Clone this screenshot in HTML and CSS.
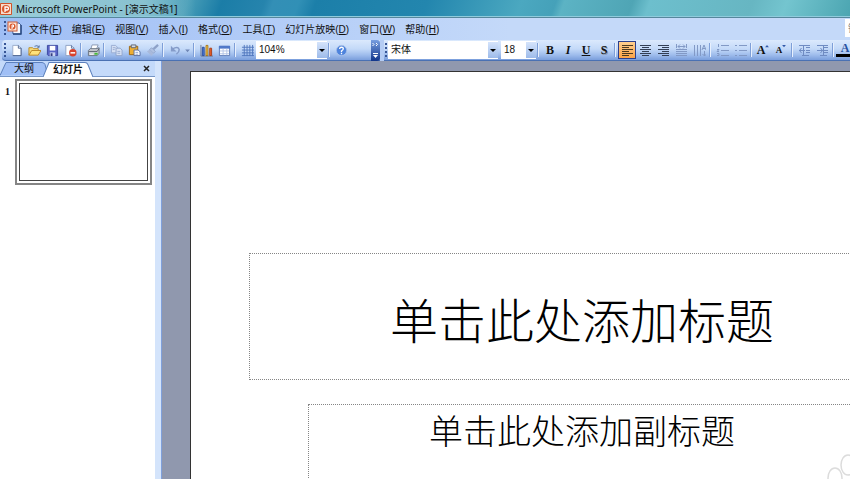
FILE: index.html
```html
<!DOCTYPE html>
<html lang="zh-CN">
<head>
  <meta charset="UTF-8" />
  <meta name="viewport" content="width=device-width, initial-scale=1" />
  <title>Microsoft PowerPoint - [演示文稿1]</title>
  <link rel="stylesheet" href="styles.css">
</head>
<body>

<header class="titlebar">
  <svg class="app-icon" viewBox="0 0 12 12"><rect width="12" height="12" rx="1" fill="#d2532a"/><rect x="1" y="1" width="10" height="10" fill="#f7dccb"/><circle cx="6" cy="6" r="4" fill="#d9572b"/><path d="M5 9V4h2a1 1 0 0 1 0 3H5" fill="none" stroke="#fff" stroke-width="1.3"/></svg>
  <h1>Microsoft PowerPoint - [演示文稿1]</h1>
</header>

<nav class="menubar">
  <span class="grip"></span>
  <svg class="doc-icon" viewBox="0 0 15 14"><path d="M5 2h7l2 2v9H6z" fill="#f4f7ff" stroke="#45659f"/><path d="M14 4v9H6" fill="none" stroke="#27477f" stroke-width="1.4"/><rect x="1" y="1" width="9" height="9" fill="#fbe3d5" stroke="#cf5a32"/><circle cx="5.500" cy="5.500" r="3" fill="#d9572b"/><path d="M5 8V4h1.500v2H5" fill="none" stroke="#fff"/></svg>
  <a href="#">文件(<u>F</u>)</a>
  <a href="#">编辑(<u>E</u>)</a>
  <a href="#">视图(<u>V</u>)</a>
  <a href="#">插入(<u>I</u>)</a>
  <a href="#">格式(<u>O</u>)</a>
  <a href="#">工具(<u>T</u>)</a>
  <a href="#">幻灯片放映(<u>D</u>)</a>
  <a href="#">窗口(<u>W</u>)</a>
  <a href="#">帮助(<u>H</u>)</a>
  <input class="ask" type="text" aria-label="帮助" placeholder="键" />
</nav>

<div class="toolbars">
  <div class="toolbar standard">
    <span class="grip"></span>
    <button class="tool" aria-label="新建"><svg viewBox="0 0 14 14"><path d="M3 1.500h6l3 3v8H3z" fill="#fff" stroke="#9dacc9"/><path d="M9 1.500v3h3v8H3" fill="none" stroke="#4b628f"/></svg></button>
    <button class="tool" aria-label="打开"><svg viewBox="0 0 14 14"><path d="M1 12V4h4l1 1h5v3" fill="#f7d978" stroke="#bb8c25"/><path d="M1 12l3-5h10l-3 5z" fill="#ffe27b" stroke="#b98323"/><path d="M7 2.500q3-2 5 1m0-2v2h-2" fill="none" stroke="#56719f"/></svg></button>
    <button class="tool" aria-label="保存"><svg viewBox="0 0 14 14"><path d="M1.500 1.500h11v11h-10l-1-1z" fill="#5964c6" stroke="#38469f"/><path d="M4 2h6v5H4z" fill="#fff"/><path d="M4 9h6v4H4z" fill="#c8d2f0"/><path d="M5 10h2v3H5z" fill="#333d80"/></svg></button>
    <button class="tool" aria-label="权限"><svg viewBox="0 0 14 14"><path d="M2 1.500h6l3 3v8H2z" fill="#fff" stroke="#8ea0c3"/><path d="M8 1.500v3h3" fill="none" stroke="#5970a0"/><circle cx="9.500" cy="9.500" r="4" fill="#d9422c"/><path d="M7 9.500h5" stroke="#fff" stroke-width="1.600"/></svg></button>
    <span class="sep"></span>
    <button class="tool" aria-label="打印"><svg viewBox="0 0 14 14"><path d="M4 6l1.500-5H12l-2 5" fill="#fff" stroke="#8896b0"/><path d="M1.500 7l2-2H11l2-1v6l-2 2.500H1.500z" fill="#c8ccd3" stroke="#697280"/><path d="M2 8h9l2-3" fill="none" stroke="#545d69"/><path d="M8 9.500h3.500v2H8z" fill="#43bc35"/><path d="M3 11h4" stroke="#fff"/></svg></button>
    <span class="sep"></span>
    <button class="tool" aria-label="复制" disabled><svg viewBox="0 0 14 14"><path d="M1.500 1.500H6l2 2v6H1.500z" fill="#d5e0f4" stroke="#98abd0"/><path d="M6.500 4.500H11l2 2v6H6.500z" fill="#d5e0f4" stroke="#91a5cb"/><path d="M3 4h3M3 6h2M8 8h3M8 10h3" stroke="#98abd0"/></svg></button>
    <button class="tool" aria-label="粘贴"><svg viewBox="0 0 14 14"><path d="M1.500 2.500h9v9h-9z" fill="#eeae32" stroke="#996415"/><path d="M3.500 1h5v3h-5z" fill="#d7dce3" stroke="#5c6370"/><path d="M6.500 6.500H11l2 2v4H6.500z" fill="#fff" stroke="#536ba2"/><path d="M8 9h3M8 11h3" stroke="#8aa0cd"/></svg></button>
    <button class="tool" aria-label="格式刷" disabled><svg viewBox="0 0 14 14"><path d="M13 1L8 5.500" stroke="#8da1c8" stroke-width="2.500"/><path d="M6 4l4 4-2 2-4-4z" fill="#b1c2e2" stroke="#8ea2c9"/><path d="M4 6l4 4-2 3-5-5z" fill="#a8b9db"/></svg></button>
    <span class="sep"></span>
    <button class="tool" aria-label="撤消" disabled><svg viewBox="0 0 14 14"><path d="M3.500 5.500Q10 2 11 6q0 3-3 5" fill="none" stroke="#849bc9" stroke-width="1.600"/><path d="M2 2v6h6z" fill="#849bc9"/></svg></button>
    <button class="tool drop" aria-label="撤消列表" disabled><svg viewBox="0 0 6 14"><path d="M0 6h5L2.500 9z" fill="#6f86b5"/></svg></button>
    <span class="sep"></span>
    <button class="tool" aria-label="图表"><svg viewBox="0 0 14 14"><path d="M1 1v12h13" fill="none" stroke="#6e7991"/><path d="M2.500 3.500h2v9h-2z" fill="#487bd7" stroke="#2b4d9b"/><path d="M6.500 1.500h2v11h-2z" fill="#ffcf45" stroke="#a47219"/><path d="M10.500 4.500h2v8h-2z" fill="#ef642c" stroke="#a53b19"/></svg></button>
    <button class="tool" aria-label="表格"><svg viewBox="0 0 14 14"><path d="M1.500 2.500h11v10h-11z" fill="#fff" stroke="#5877b4"/><path d="M1 2h12v3H1z" fill="#5079c9"/><path d="M5.500 5v7M9.500 5v7M2 7.500h10M2 10.500h10" stroke="#b2c4e6"/></svg></button>
    <span class="sep"></span>
    <button class="tool" aria-label="网格"><svg viewBox="0 0 14 14"><path d="M3.500 1v12M6.500 1v12M9.500 1v12M12.500 1v12M1 3.500h13M1 6.500h13M1 9.500h13M1 12.500h13" stroke="#4f77bd"/></svg></button>
    <span class="combo zoom"><select aria-label="显示比例"><option>104%</option></select></span>
    <span class="sep"></span>
    <button class="tool" aria-label="帮助"><svg viewBox="0 0 14 14"><circle cx="7" cy="7" r="5.500" fill="#4d83dd" stroke="#a4bee8"/><path d="M5 5.500q0-2 2-2t2 1.700q0 1-2 2.300v1M7 9.500v1.500" fill="none" stroke="#fff" stroke-width="1.400"/></svg></button>
    <button class="more" aria-label="工具栏选项"><svg viewBox="0 0 9 20"><path d="M1.500 3l1.500 1.500L1.500 6M5 3l1.500 1.500L5 6" fill="none" stroke="#fff"/><path d="M2 13.500h5" stroke="#fff"/><path d="M2 15h5l-2.500 3z" fill="#fff"/></svg></button>
  </div>

  <div class="toolbar formatting">
    <span class="grip"></span>
    <span class="combo font"><select aria-label="字体"><option>宋体</option></select></span>
    <span class="combo size"><select aria-label="字号"><option>18</option></select></span>
    <span class="sep"></span>
    <button class="tool letter" aria-label="加粗"><b>B</b></button>
    <button class="tool letter" aria-label="倾斜"><i>I</i></button>
    <button class="tool letter" aria-label="下划线"><u>U</u></button>
    <button class="tool letter shadow" aria-label="阴影">S</button>
    <span class="sep"></span>
    <button class="tool active" aria-label="左对齐"><svg viewBox="0 0 13 13"><path d="M1 1.500h11M1 3.500h7M1 5.500h11M1 7.500h7M1 9.500h11M1 11.500h7" stroke="#4b3920"/></svg></button>
    <button class="tool" aria-label="居中"><svg viewBox="0 0 13 13"><path d="M1 1.500h11M3 3.500h7M1 5.500h11M3 7.500h7M1 9.500h11M3 11.500h7" stroke="#333f55"/></svg></button>
    <button class="tool" aria-label="右对齐"><svg viewBox="0 0 13 13"><path d="M1 1.500h11M5 3.500h7M1 5.500h11M5 7.500h7M1 9.500h11M5 11.500h7" stroke="#333f55"/></svg></button>
    <button class="tool" aria-label="分散对齐" disabled><svg viewBox="0 0 13 13"><path d="M1.500 0v4M11.500 0v4M3 2.500h7M5 .5l-2 2 2 2M8 .5l2 2-2 2M1 5.500h11M1 7.500h11M1 9.500h11M1 11.500h11" fill="none" stroke="#8299c5"/></svg></button>
    <button class="tool" aria-label="文字方向" disabled><svg viewBox="0 0 13 13"><path d="M1.500 1v11M4.500 1v11M7.500 1v11M9 6l2-5 2 5M10 4.500h2M11.500 7v5M9.500 10l2 2 2-2" fill="none" stroke="#8299c5"/></svg></button>
    <span class="sep"></span>
    <button class="tool" aria-label="编号" disabled><svg viewBox="0 0 13 13"><path d="M2.500 0v3M1 5.500h2l-2 2h2M1 9.500h2v2H1M5 1.500h8M5 6.500h8M5 11.500h8" fill="none" stroke="#8299c5"/></svg></button>
    <button class="tool" aria-label="项目符号" disabled><svg viewBox="0 0 13 13"><path d="M1 1.500h2M1 6.500h2M1 11.500h2M5 1.500h8M5 6.500h8M5 11.500h8" stroke="#8299c5"/></svg></button>
    <span class="sep"></span>
    <button class="tool grow" aria-label="增大字号">A<svg viewBox="0 0 5 4"><path d="M0 3h5L2.500 0z" fill="#3158a8"/></svg></button>
    <button class="tool shrink" aria-label="减小字号">A<svg viewBox="0 0 5 4"><path d="M0 0h5L2.500 3z" fill="#3158a8"/></svg></button>
    <span class="sep"></span>
    <button class="tool" aria-label="减少缩进量" disabled><svg viewBox="0 0 13 13"><path d="M1 1.500h11M8 3.500h4M8 6.500h4M8 8.500h4M4 11.500h7M1 6.500h6M3.500 4L1.500 6.500l2 2.500M5.500 1v11" fill="none" stroke="#6f8bc2"/></svg></button>
    <button class="tool" aria-label="增加缩进量" disabled><svg viewBox="0 0 13 13"><path d="M1 1.500h11M8 3.500h4M8 6.500h4M8 8.500h4M4 11.500h7M1 6.500h6M4.500 4l2 2.500-2 2.500M7.500 1v11" fill="none" stroke="#6f8bc2"/></svg></button>
    <span class="sep"></span>
    <button class="tool color" aria-label="字体颜色">A</button>
  </div>
</div>

<main class="body">
  <aside class="outline">
    <div class="tabs">
      <button class="tab"><svg viewBox="0 0 48 14" preserveAspectRatio="none"><path d="M0 13.500L6 .5h36q2 0 3 2l3 11" fill="#a0bff5" stroke="#5c80bd"/></svg><span>大纲</span></button>
      <button class="tab current"><svg viewBox="0 0 50 14" preserveAspectRatio="none"><path d="M0 14L6 .5h36q2 0 3 2l5 11.500" fill="#fff" stroke="#5c80bd"/></svg><span>幻灯片</span></button>
      <button class="close" aria-label="关闭"><svg viewBox="0 0 7 7"><path d="M1 1l5 5M6 1L1 6" stroke="#222" stroke-width="1.500"/></svg></button>
    </div>
    <div class="thumb-row">
      <span class="number">1</span>
      <button class="thumb" aria-label="幻灯片 1"></button>
    </div>
  </aside>
  <div class="splitter"></div>
  <section class="workspace">
    <article class="slide">
      <h2 class="placeholder title">单击此处添加标题</h2>
      <p class="placeholder subtitle">单击此处添加副标题</p>
    </article>
    <svg class="mark" viewBox="0 0 25 25"><ellipse cx="10" cy="24" rx="7" ry="10"/><ellipse cx="23" cy="11" rx="7" ry="10"/></svg>
  </section>
</main>

</body>
</html>
```

FILE: styles.css
```css
* {
  box-sizing: border-box;
}
body {
  margin: 0;
  height: 100vh;
  overflow: hidden;
  display: flex;
  flex-direction: column;
  font-family: "Liberation Sans", "Noto Sans CJK SC", sans-serif;
  font-size: 10px;
  color: #111;
  background: #9098ae;
}
button, input, select {
  font: inherit;
  color: inherit;
  padding: 0;
  border: none;
  background: none;
}
svg {
  display: block;
  flex: none;
}

/* title bar */
.titlebar {
  flex: none;
  height: 18px;
  display: flex;
  align-items: center;
  gap: 4px;
  background:
    linear-gradient(90deg, rgba(190,222,230,0.6) 0%, rgba(190,222,230,0.5) 17%, rgba(190,222,230,0) 23%),
    linear-gradient(110deg, #69b4c2 0%, #4a9fb8 22%, #1b7da7 26%, #2684ad 31%, #338fb6 32%, #3190b6 35%, #1c7fa9 37%, #2386ae 50%, #4ba8c0 61%, #45a1b9 65%, #5cb3c4 66%, #4fa5b5 74%, #6dbfcd 76%, #67b6c2 88%, #74c5cf 92%, #4ba5b1 100%);
  border-bottom: 1px solid #56879c;
  box-shadow: inset 0 -1px #8fcbdc;
}
.titlebar h1 {
  margin: 0;
  font-family: "Noto Sans", "Noto Sans CJK SC", sans-serif;
  font-size: 10px;
  font-weight: normal;
  white-space: nowrap;
}
.app-icon {
  width: 12px;
  height: 12px;
}

/* menu */
.menubar {
  flex: none;
  height: 22px;
  display: flex;
  align-items: center;
  overflow: hidden;
  padding: 0 0 2px 4px;
  background: linear-gradient(90deg, #9fbef5, #c4d9f9 60%);
}
.menubar a {
  flex: none;
  padding: 0 5px;
  color: #111;
  text-decoration: none;
}
.doc-icon {
  width: 15px;
  height: 14px;
  margin-right: 2px;
}
.grip {
  flex: none;
  width: 3px;
  height: 14px;
  background: repeating-linear-gradient(#375596 0 2px, transparent 2px 4px) left / 2px 100% no-repeat;
}
.ask {
  flex: none;
  width: 120px;
  height: 18px;
  margin: 0 -115px 0 auto;
  padding-left: 3px;
  background: #fff;
}
.ask::placeholder {
  color: #888;
}

/* toolbars */
.toolbars {
  flex: none;
  height: 21px;
  display: flex;
  gap: 4px;
  overflow: hidden;
  background: #b4ccf4;
}
.toolbar {
  flex: none;
  height: 21px;
  display: flex;
  align-items: center;
  background: linear-gradient(#dbe9fd, #c3d9f8 45%, #9ebcec 75%, #7a9edc);
  border-bottom: 1px solid #4a71b3;
}
.standard {
  margin-left: 2px;
  padding-left: 2px;
  border-radius: 4px 0 0 4px;
}
.formatting {
  flex: 1 0 auto;
  padding-left: 1px;
}
.tool {
  flex: none;
  width: 18px;
  height: 18px;
  display: flex;
  align-items: center;
  justify-content: center;
}
.tool svg {
  width: 13px;
  height: 13px;
}
.drop {
  width: 8px;
}
.drop svg {
  width: 6px;
}
.sep {
  flex: none;
  width: 2px;
  height: 14px;
  margin: 0 2px 0 1px;
  background: linear-gradient(90deg, #7e9fd8 50%, #e8f0fd 50%);
}
.active {
  background: linear-gradient(#ffcf8f, #fba346);
  border: 1px solid #2c3f8c;
}
.letter {
  font-family: "Liberation Serif", serif;
  font-size: 12px;
  font-weight: bold;
}
.shadow {
  text-shadow: 1px 1px #8a93a5;
}
.grow, .shrink, .color {
  font-family: "Liberation Serif", serif;
  font-size: 12px;
  font-weight: bold;
}
.shrink {
  font-size: 9px;
}
.tool.grow svg, .tool.shrink svg {
  width: 4px;
  height: 3px;
  align-self: flex-start;
  margin-top: 4px;
}
.color {
  height: 14px;
  color: #27509f;
  border-bottom: 3px solid #000;
}
.combo {
  flex: none;
  position: relative;
  height: 18px;
  margin-right: 3px;
  background: #fff;
}
.combo select {
  appearance: none;
  width: 100%;
  height: 16px;
  padding: 0 14px 0 3px;
}
.combo::before {
  content: "";
  position: absolute;
  top: 1px;
  right: 0;
  bottom: 1px;
  width: 10px;
  background: linear-gradient(#d5e4fb, #9dbbea);
  pointer-events: none;
}
.combo::after {
  content: "";
  position: absolute;
  top: 8px;
  right: 2px;
  border: 3px solid transparent;
  border-top-color: #000;
  border-bottom: none;
  pointer-events: none;
}
.zoom {
  width: 71px;
  margin-right: 0;
}
.font {
  width: 110px;
}
.size {
  width: 35px;
  margin-right: 0;
}
.more {
  flex: none;
  width: 9px;
  height: 21px;
  margin-left: 21px;
  background: linear-gradient(#789ee0, #11358a);
  border-radius: 0 3px 3px 0;
}
.more svg {
  width: 9px;
  height: 20px;
}

/* outline pane */
.body {
  flex: 1;
  min-height: 0;
  display: flex;
}
.outline {
  flex: none;
  width: 155px;
  background: #fff;
}
.tabs {
  height: 16px;
  display: flex;
  align-items: flex-end;
  background: #c4dafa;
  border-bottom: 1px solid #7696c7;
}
.tab {
  position: relative;
  width: 48px;
  height: 14px;
  line-height: 14px;
}
.tab svg {
  position: absolute;
  top: 0;
  left: 0;
  width: 100%;
  height: 100%;
}
.tab span {
  position: relative;
}
.current {
  width: 50px;
  height: 15px;
  margin: 0 0 -1px -5px;
  font-weight: bold;
}
.close {
  align-self: center;
  margin: 0 5px 0 auto;
}
.close svg {
  width: 7px;
  height: 7px;
}
.thumb-row {
  display: flex;
  padding: 2px 3px 0 5px;
}
.number {
  width: 10px;
  padding-top: 7px;
  font-family: "Liberation Serif", serif;
  font-weight: bold;
}
.thumb {
  flex: 1;
  aspect-ratio: 137 / 104;
  padding: 2px;
  border: 2px solid #858585;
}
.thumb::before {
  content: "";
  display: block;
  height: 100%;
  border: 1px solid #444;
}
.splitter {
  flex: none;
  width: 7px;
  background: #d4e4fb;
  border-right: 1px solid #7fa0dc;
}

/* slide: runs past the right and bottom of the window */
.workspace {
  flex: 1;
  position: relative;
  overflow: hidden;
  padding: 10px 0 0 28px;
  background: #9098ae;
}
.slide {
  width: 784px;
  aspect-ratio: 4 / 3;
  padding-top: 181px;
  background: #fff;
  border: 1px solid #333;
}
.placeholder {
  margin: 0 58px;
  border: 1px dotted #858585;
  font-family: "Noto Sans CJK SC", sans-serif;
  font-weight: 300;
  text-align: center;
  color: #000;
}
.title {
  height: 127px;
  padding-top: 28px;
  font-size: 48px;
  line-height: 72px;
}
.subtitle {
  height: 170px;
  margin: 24px 117px 0;
  font-size: 34px;
  line-height: 50px;
}
.mark {
  position: absolute;
  right: 0;
  bottom: 0;
  width: 25px;
  height: 25px;
  fill: none;
  stroke: #dcdcdc;
  stroke-width: 1.5;
}
```
